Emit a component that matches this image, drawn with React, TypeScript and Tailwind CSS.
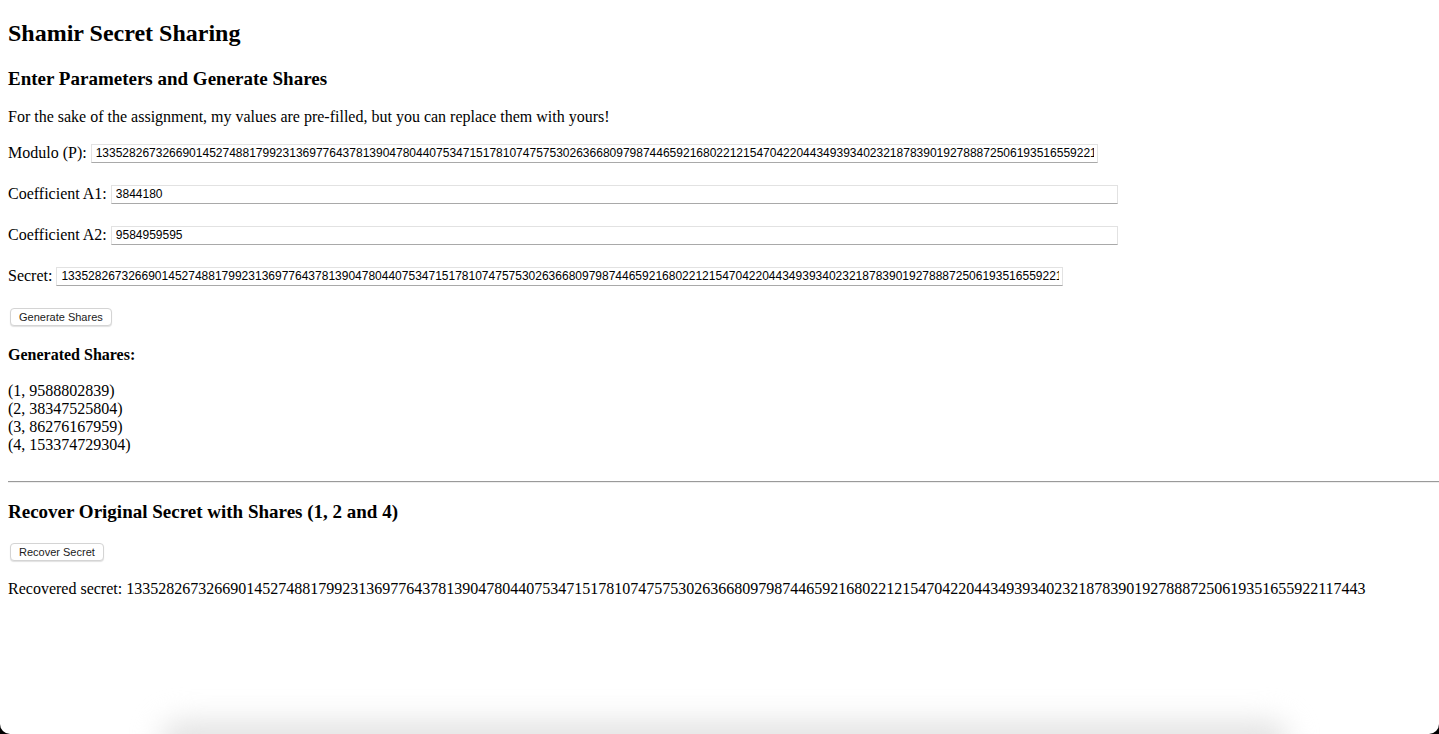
const SECRET =
  "13352826732669014527488179923136977643781390478044075347151781074757530263668097987446592168022121547042204434939340232187839019278887250619351655922117443";

const shares = [
  "(1, 9588802839)",
  "(2, 38347525804)",
  "(3, 86276167959)",
  "(4, 153374729304)",
];

function Field({ label, value }: { label: string; value: string }) {
  return (
    <div className="flex items-center h-[22px]">
      <label className="mr-[4px] leading-[18px]">{label}</label>
      <input
        type="text"
        defaultValue={value}
        className="w-[1007px] h-[19px] pl-[4px] pr-[3px] border border-[#e2e2e2] border-b-[#a9a9a9] bg-white text-[12px] text-black outline-none font-['Liberation_Sans',Arial,sans-serif]"
      />
    </div>
  );
}

function Btn({ children }: { children: string }) {
  return (
    <button className="ml-[2px] h-[18px] px-[8px] rounded-[4px] border border-[#d4d4d4] bg-white shadow-[0_1px_1px_rgba(0,0,0,0.12)] text-[11px] leading-[16px] text-[#1a1a1a] font-['Liberation_Sans',Arial,sans-serif]">
      {children}
    </button>
  );
}

export default function App() {
  return (
    <div className="bg-black">
      <div className="relative h-[734px] overflow-hidden rounded-b-[10px] bg-white px-2 text-[16px] text-black font-['Liberation_Serif','Times_New_Roman',serif]">
        <h2 className="pt-[20px] text-[24px] font-bold leading-[27.6px]">
          Shamir Secret Sharing
        </h2>
        <h3 className="mt-[20px] text-[19px] font-bold leading-[21.5px]">
          Enter Parameters and Generate Shares
        </h3>
        <p className="mt-[18.7px] leading-[18.4px]">
          For the sake of the assignment, my values are pre-filled, but you can replace them with yours!
        </p>

        <div className="mt-[16px] flex flex-col gap-[19px]">
          <Field label="Modulo (P):" value={SECRET} />
          <Field label="Coefficient A1:" value="3844180" />
          <Field label="Coefficient A2:" value="9584959595" />
          <Field label="Secret:" value={SECRET} />
          <div className="flex items-center h-[22px]">
            <Btn>Generate Shares</Btn>
          </div>
        </div>

        <h4 className="mt-[18px] font-bold leading-[18.4px]">Generated Shares:</h4>
        <div className="mt-[17px] leading-[18px]">
          {shares.map((s) => (
            <div key={s}>{s}</div>
          ))}
        </div>

        <hr className="mt-[27px] -mr-2 border-0 border-t border-t-[#9a9a9a] border-b border-b-[#eeeeee]" />

        <h3 className="mt-[18px] text-[19px] font-bold leading-[21.5px]">
          Recover Original Secret with Shares (1, 2 and 4)
        </h3>
        <div className="mt-[21px] flex">
          <Btn>Recover Secret</Btn>
        </div>
        <p className="mt-[19px] leading-[18.4px] whitespace-nowrap">Recovered secret: {SECRET}</p>

        <div className="pointer-events-none absolute left-[160px] right-[150px] bottom-[-30px] h-[44px] rounded-full bg-[#e4e4e4] blur-[14px]" />
      </div>
    </div>
  );
}
